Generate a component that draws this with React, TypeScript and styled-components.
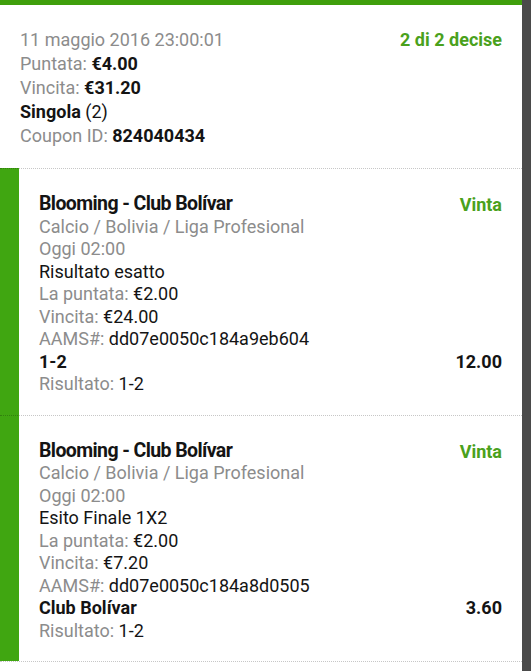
import React from "react";
import styled, { createGlobalStyle } from "styled-components";

const Global = createGlobalStyle`
  html, body { margin: 0; padding: 0; background: #4a4a4a; }
  body { font-family: Roboto, "Noto Sans", Arial, sans-serif; }
`;

const Page = styled.div`
  display: flex;
  width: 531px;
  min-height: 671px;
  background: #4a4a4a;
`;

const Card = styled.div`
  width: 522px;
  background: #fff;
  border-top: 5px solid #3f9f0c;
  min-height: 666px;
`;

const Header = styled.div`
  display: flex;
  justify-content: space-between;
  align-items: flex-start;
  padding: 23px 20px 20px 20px;
`;

const Lines = styled.div<{ $lh: number }>`
  display: flex;
  flex-direction: column;
  font-size: 18px;
  line-height: ${(p) => p.$lh}px;
`;

const Muted = styled.span`
  color: #8c8c8c;
`;

const Value = styled.span<{ $bold?: boolean }>`
  color: #141414;
  font-weight: ${(p) => (p.$bold ? 700 : 400)};
`;

const Status = styled.span`
  color: #4aa11c;
  font-weight: 700;
  font-size: 18px;
  line-height: 24px;
`;

const Bet = styled.div`
  display: flex;
  justify-content: space-between;
  padding: 24px 20px 19px 39px;
  border-top: 1px dotted rgba(0, 0, 0, 0.22);
  background: linear-gradient(to right, #40a611 0, #40a611 19px, #fff 19px);
`;

const Title = styled.span`
  color: #141414;
  font-weight: 700;
  font-size: 19.5px;
  letter-spacing: -0.6px;
`;

const Side = styled.div`
  display: flex;
  flex-direction: column;
  justify-content: space-between;
  align-items: flex-end;
  font-size: 18px;
  line-height: 22.5px;
  padding-bottom: 22.5px;
`;

const Odds = styled.span`
  color: #141414;
  font-weight: 700;
`;

const FinalSep = styled.div`
  border-top: 1px dotted rgba(0, 0, 0, 0.22);
  height: 9px;
`;

type BetData = {
  market: string;
  stake: string;
  win: string;
  aams: string;
  pick: string;
  odds: string;
};

const bets: BetData[] = [
  { market: "Risultato esatto", stake: "€2.00", win: "€24.00", aams: "dd07e0050c184a9eb604", pick: "1-2", odds: "12.00" },
  { market: "Esito Finale 1X2", stake: "€2.00", win: "€7.20", aams: "dd07e0050c184a8d0505", pick: "Club Bolívar", odds: "3.60" },
];

export default function App() {
  return (
    <>
      <Global />
      <Page>
        <Card>
          <Header>
            <Lines $lh={24}>
              <Muted>11 maggio 2016 23:00:01</Muted>
              <span><Muted>Puntata: </Muted><Value $bold>€4.00</Value></span>
              <span><Muted>Vincita: </Muted><Value $bold>€31.20</Value></span>
              <span><Value $bold>Singola</Value> <Value>(2)</Value></span>
              <span><Muted>Coupon ID: </Muted><Value $bold>824040434</Value></span>
            </Lines>
            <Status>2 di 2 decise</Status>
          </Header>
          {bets.map((b, i) => (
            <Bet key={i}>
              <Lines $lh={22.5}>
                <Title>Blooming - Club Bolívar</Title>
                <Muted>Calcio / Bolivia / Liga Profesional</Muted>
                <Muted>Oggi 02:00</Muted>
                <Value>{b.market}</Value>
                <span><Muted>La puntata: </Muted><Value>{b.stake}</Value></span>
                <span><Muted>Vincita: </Muted><Value>{b.win}</Value></span>
                <span><Muted>AAMS#: </Muted><Value>{b.aams}</Value></span>
                <Value $bold>{b.pick}</Value>
                <span><Muted>Risultato: </Muted><Value>1-2</Value></span>
              </Lines>
              <Side>
                <Status>Vinta</Status>
                <Odds>{b.odds}</Odds>
              </Side>
            </Bet>
          ))}
          <FinalSep />
        </Card>
      </Page>
    </>
  );
}
